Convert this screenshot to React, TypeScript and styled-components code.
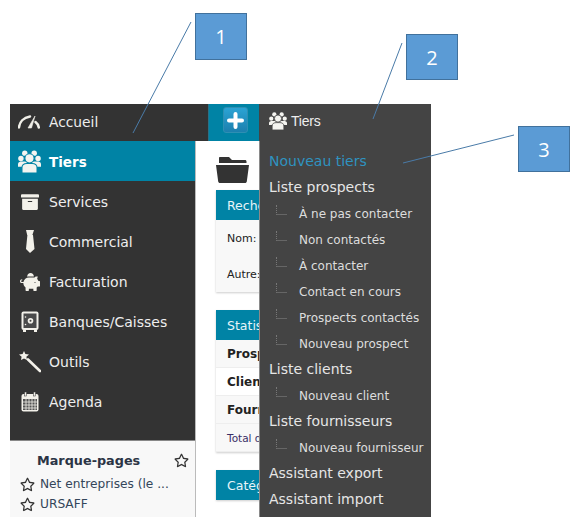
import React from "react";
import styled, { createGlobalStyle } from "styled-components";
import { FaArchive, FaPiggyBank, FaRegStar } from "react-icons/fa";

const Global = createGlobalStyle`
  html, body { margin: 0; padding: 0; background: #fff; }
  body { font-family: "DejaVu Sans", Verdana, sans-serif; }
`;

const Page = styled.div`
  position: relative;
  width: 584px;
  height: 532px;
  box-sizing: border-box;
  padding: 104px 0 0 10px;
  overflow: hidden;
`;
const App = styled.div`
  position: relative;
  width: 421px;
  height: 413px;
  overflow: hidden;
  display: flex;
  flex-direction: column;
`;
const TopBar = styled.header`
  display: flex;
  height: 37px;
  flex: none;
  background: #333;
`;
const Home = styled.div`
  width: 198px;
  display: flex;
  align-items: center;
  gap: 9px;
  padding: 0 0 2px 8px;
  box-sizing: border-box;
  color: #eee;
  font-size: 13.8px;
`;
const AddZone = styled.div`
  width: 51px;
  background: #0083a5;
  border-left: 1px solid #2a6f84;
  box-sizing: border-box;
  padding: 3px 0 0 14px;
`;
const AddButton = styled.div`
  width: 25px;
  height: 26px;
  border-radius: 3px;
  background: linear-gradient(#2ba3d4, #1c7fae);
  border: 1px solid #2e8fb3;
  box-sizing: border-box;
  display: flex;
  align-items: center;
  justify-content: center;
`;
const Body = styled.div`
  display: flex;
  width: 249px;
  flex: 1;
  min-height: 0;
`;
const Sidebar = styled.aside`
  width: 185px;
  flex: none;
  display: flex;
  flex-direction: column;
  border-right: 1px solid #bbb;
`;
const Nav = styled.nav`
  height: 300px;
  flex: none;
  background: #333;
  border-bottom: 1px solid #888;
  box-sizing: border-box;
`;
const NavItem = styled.div<{ $active?: boolean }>`
  height: 40px;
  display: flex;
  align-items: center;
  box-sizing: border-box;
  padding-top: 1px;
  background: ${(p) => (p.$active ? "#0083a5" : "transparent")};
  color: ${(p) => (p.$active ? "#fff" : "#eee")};
  font-size: ${(p) => (p.$active ? "13.5px" : "14px")};
  font-weight: ${(p) => (p.$active ? 700 : 400)};
`;
const IconSlot = styled.span`
  width: 39px;
  flex: none;
  display: flex;
  justify-content: center;
  color: #f3f1ea;
`;
const Bookmarks = styled.section`
  flex: 1;
  background: #f8f8f8;
  overflow: hidden;
  padding: 12px 6px 0 10px;
`;
const BookmarkTitle = styled.div`
  display: flex;
  justify-content: space-between;
  align-items: center;
  height: 14px;
  padding-left: 17px;
  font-weight: 700;
  font-size: 12.8px;
  color: #2b3445;
  margin-bottom: 7px;
  svg { color: #333; }
`;
const BookmarkRow = styled.div`
  display: flex;
  align-items: center;
  gap: 5px;
  height: 20px;
  font-size: 12.2px;
  color: #34465a;
  white-space: nowrap;
  svg { color: #333; flex: none; }
`;
const Main = styled.main`
  flex: 1;
  min-width: 0;
  padding: 16px 0 0 20px;
  background: #fff;
  overflow: hidden;
`;
const Title = styled.div`
  display: flex;
  align-items: center;
  width: 240px;
  height: 26px;
  gap: 10px;
  margin-bottom: 7px;
  white-space: nowrap;
  svg { flex: none; }
`;
const TitleMark = styled.span`
  font-size: 14px;
  color: #888;
  font-weight: 700;
`;
const Panel = styled.section`
  width: 240px;
  margin-bottom: 18px;
  background: #fff;
  box-shadow: 0 1px 2px rgba(0, 0, 0, 0.2);
`;
const PanelHead = styled.div`
  height: 30px;
  background: #0083a5;
  color: #e8f4f8;
  font-size: 12.5px;
  display: flex;
  align-items: center;
  padding-left: 11px;
  white-space: nowrap;
`;
const SearchBody = styled.div`
  background: #f8f8f8;
  height: 72px;
  padding: 11px 0 0 11px;
  box-sizing: border-box;
  font-size: 11px;
  color: #222;
  display: flex;
  flex-direction: column;
  gap: 21px;
  line-height: 15px;
`;
const StatRow = styled.div<{ $odd?: boolean }>`
  height: 28px;
  display: flex;
  align-items: center;
  padding-left: 11px;
  font-size: 12px;
  font-weight: 700;
  color: #222;
  white-space: nowrap;
  background: ${(p) => (p.$odd ? "#f8f8f8" : "#fff")};
  border-bottom: 1px solid #eee;
  box-sizing: border-box;
`;
const TotalRow = styled(StatRow)`
  font-weight: 400;
  font-size: 10.5px;
  color: #3a2f66;
  background: #f8f8f8;
`;
const Dropdown = styled.div`
  position: absolute;
  top: 0;
  bottom: 0;
  left: 249px;
  width: 172px;
  background: #444;
  display: flex;
  flex-direction: column;
`;
const DropHead = styled.div`
  height: 37px;
  flex: none;
  display: flex;
  align-items: center;
  gap: 4px;
  padding: 0 0 4px 10px;
  box-sizing: border-box;
  color: #eee;
  font-family: "Liberation Sans", Arial, sans-serif;
  font-size: 14px;
  letter-spacing: -0.2px;
`;
const DropList = styled.div`
  flex: 1;
  padding-top: 7px;
  box-shadow: inset 1px 0 0 #8a8a8a;
`;
const TopLink = styled.div<{ $accent?: boolean }>`
  height: 26px;
  display: flex;
  align-items: center;
  padding-left: 10px;
  font-size: 14px;
  color: ${(p) => (p.$accent ? "#2f93c0" : "#e6e6e6")};
  white-space: nowrap;
`;
const SubLink = styled.div`
  position: relative;
  height: 26px;
  display: flex;
  align-items: center;
  padding: 1px 0 0 40px;
  box-sizing: border-box;
  font-size: 12px;
  color: #ddd;
  white-space: nowrap;
  &::before {
    content: "";
    position: absolute;
    left: 17px;
    top: 5px;
    width: 10px;
    height: 9px;
    border-left: 1px dotted #777;
    border-bottom: 1px solid #666;
  }
`;
const Callout = styled.div<{ $x: number; $y: number; $w: number; $h: number }>`
  position: absolute;
  left: ${(p) => p.$x}px;
  top: ${(p) => p.$y}px;
  width: ${(p) => p.$w}px;
  height: ${(p) => p.$h}px;
  box-sizing: border-box;
  background: #5b9bd5;
  border: 1px solid #41719c;
  color: #fff;
  font-family: "Open Sans", sans-serif;
  font-size: 20px;
  display: flex;
  align-items: center;
  justify-content: center;
`;
const Leaders = styled.svg`
  position: absolute;
  inset: 0;
  pointer-events: none;
`;

const Gauge = () => (
  <svg width="22" height="16" viewBox="0 0 22 16" fill="none" stroke="#f0efe8">
    <path d="M1 13.5C1.5 8 5.5 3.5 12 2.5" strokeWidth="2.5" strokeLinecap="round" />
    <path d="M10 14L17 2L13.5 14Z" fill="#f0efe8" strokeWidth="0.6" />
    <path d="M17.5 8C19.5 9.5 20.5 11 20.8 13.5" strokeWidth="2.5" strokeLinecap="round" />
  </svg>
);
const People = ({ size, edge }: { size: number; edge: string }) => (
  <svg width={size} height={size} viewBox="0 0 22 22" fill="#f4f4f0">
    <circle cx="6.5" cy="3" r="2.6" />
    <circle cx="15.5" cy="3" r="2.6" />
    <circle cx="2.8" cy="8.2" r="2.6" />
    <circle cx="19.2" cy="8.2" r="2.6" />
    <path d="M0 13.5C0 11.5 2 11 4 11H18C20 11 22 11.5 22 13.5V16H0Z" />
    <circle cx="11" cy="8" r="4.4" stroke={edge} strokeWidth="1" />
    <path d="M3.8 22V17C3.8 14 6.5 13 8.5 13H13.5C15.5 13 18.2 14 18.2 17V22Z" stroke={edge} strokeWidth="1" />
  </svg>
);
const Tie = () => (
  <svg width="10" height="23" viewBox="0 0 10 23" fill="#f3f1ea">
    <path d="M1 0H9L7.4 5H8L9.5 19L5 23L1 19L2.4 5H2.2Z" />
  </svg>
);
const Safe = () => (
  <svg width="18" height="21" viewBox="0 0 18 21">
    <rect x="0.5" y="0.5" width="17" height="18.5" rx="2" fill="#f3f1ea" />
    <rect x="2.5" y="2.5" width="13" height="14.5" fill="#4a4a4a" />
    <circle cx="9.5" cy="9.8" r="2.8" fill="#f3f1ea" />
    <circle cx="9.5" cy="9.8" r="1" fill="#444" />
    <circle cx="4.5" cy="6" r="0.8" fill="#f3f1ea" />
    <circle cx="4.5" cy="13.5" r="0.8" fill="#f3f1ea" />
    <rect x="2" y="19" width="3" height="2" fill="#f3f1ea" />
    <rect x="13" y="19" width="3" height="2" fill="#f3f1ea" />
  </svg>
);
const Wand = () => (
  <svg width="22" height="22" viewBox="0 0 22 22" fill="#f3f1ea">
    <path d="M5 0L6.4 3L10 3.4L7.4 5.8L8 9L5 7.4L2 9L2.6 5.8L0 3.4L3.6 3Z" />
    <path d="M9 8.5L21 20" stroke="#f3f1ea" strokeWidth="2.6" strokeLinecap="round" />
  </svg>
);
const Calendar = () => (
  <svg width="18" height="20" viewBox="0 0 18 20">
    <rect x="0.5" y="2" width="17" height="17.5" rx="2" fill="#f3f1ea" />
    <rect x="3.5" y="0" width="2" height="4" fill="#f3f1ea" stroke="#333" strokeWidth="0.5" />
    <rect x="12.5" y="0" width="2" height="4" fill="#f3f1ea" stroke="#333" strokeWidth="0.5" />
    <rect x="2" y="7" width="14" height="11" fill="#555" />
    <path d="M5 7V18M8 7V18M11 7V18M14 7V18M2 10H16M2 13H16M2 16H16" stroke="#f3f1ea" strokeWidth="0.8" />
  </svg>
);
const Folder = () => (
  <svg width="33" height="26" viewBox="0 0 33 26" fill="#333">
    <path d="M3 1C3 0.4 3.5 0 4 0H13L16 3H29C30 3 30.5 3.6 30.5 4.5V6H3Z" />
    <path d="M0 8H33L30.8 24.5C30.7 25.4 30 26 29 26H4C3 26 2.3 25.4 2.2 24.5Z" />
  </svg>
);
const Plus = () => (
  <svg width="17" height="17" viewBox="0 0 17 17" stroke="#fff" strokeWidth="4" strokeLinecap="round">
    <path d="M8.5 2V15M2 8.5H15" />
  </svg>
);

const items: { label: string; icon: React.ReactNode; active?: boolean }[] = [
  { label: "Tiers", icon: <People size={23} edge="#0083a5" />, active: true },
  { label: "Services", icon: <FaArchive size={18} /> },
  { label: "Commercial", icon: <Tie /> },
  { label: "Facturation", icon: <FaPiggyBank size={20} /> },
  { label: "Banques/Caisses", icon: <Safe /> },
  { label: "Outils", icon: <Wand /> },
  { label: "Agenda", icon: <Calendar /> },
];

const menu: { label: string; sub?: boolean; accent?: boolean }[] = [
  { label: "Nouveau tiers", accent: true },
  { label: "Liste prospects" },
  { label: "À ne pas contacter", sub: true },
  { label: "Non contactés", sub: true },
  { label: "À contacter", sub: true },
  { label: "Contact en cours", sub: true },
  { label: "Prospects contactés", sub: true },
  { label: "Nouveau prospect", sub: true },
  { label: "Liste clients" },
  { label: "Nouveau client", sub: true },
  { label: "Liste fournisseurs" },
  { label: "Nouveau fournisseur", sub: true },
  { label: "Assistant export" },
  { label: "Assistant import" },
];

export default function AppPage() {
  return (
    <Page>
      <Global />
      <App>
        <TopBar>
          <Home>
            <Gauge />
            Accueil
          </Home>
          <AddZone>
            <AddButton>
              <Plus />
            </AddButton>
          </AddZone>
        </TopBar>
        <Body>
          <Sidebar>
            <Nav>
              {items.map((it) => (
                <NavItem key={it.label} $active={it.active}>
                  <IconSlot>{it.icon}</IconSlot>
                  {it.label}
                </NavItem>
              ))}
            </Nav>
            <Bookmarks>
              <BookmarkTitle>
                Marque-pages
                <FaRegStar size={15} />
              </BookmarkTitle>
              <BookmarkRow>
                <FaRegStar size={15} />
                Net entreprises (le ...
              </BookmarkRow>
              <BookmarkRow>
                <FaRegStar size={15} />
                URSAFF
              </BookmarkRow>
              <BookmarkRow>
                <FaRegStar size={15} />
              </BookmarkRow>
            </Bookmarks>
          </Sidebar>
          <Main>
            <Title>
              <Folder />
              <TitleMark>Tiers</TitleMark>
            </Title>
            <Panel>
              <PanelHead>Rechercher</PanelHead>
              <SearchBody>
                <span>Nom:</span>
                <span>Autre:</span>
              </SearchBody>
            </Panel>
            <Panel>
              <PanelHead>Statistiques</PanelHead>
              <StatRow $odd>Prospects</StatRow>
              <StatRow>Clients</StatRow>
              <StatRow $odd>Fournisseurs</StatRow>
              <TotalRow>Total de tiers</TotalRow>
            </Panel>
            <Panel>
              <PanelHead>Catégories</PanelHead>
            </Panel>
          </Main>
        </Body>
        <Dropdown>
          <DropHead>
            <People size={18} edge="#444" />
            Tiers
          </DropHead>
          <DropList>
            {menu.map((m) =>
              m.sub ? (
                <SubLink key={m.label}>{m.label}</SubLink>
              ) : (
                <TopLink key={m.label} $accent={m.accent}>{m.label}</TopLink>
              )
            )}
          </DropList>
        </Dropdown>
      </App>
      <Leaders width="584" height="532" viewBox="0 0 584 532" fill="none" stroke="#4a7ba8">
        <path d="M191 22L133 133" />
        <path d="M402 43L373 119" />
        <path d="M514 135L403 163" />
      </Leaders>
      <Callout $x={195} $y={13} $w={52} $h={47}>1</Callout>
      <Callout $x={406} $y={34} $w={52} $h={46}>2</Callout>
      <Callout $x={518} $y={126} $w={52} $h={46}>3</Callout>
    </Page>
  );
}
